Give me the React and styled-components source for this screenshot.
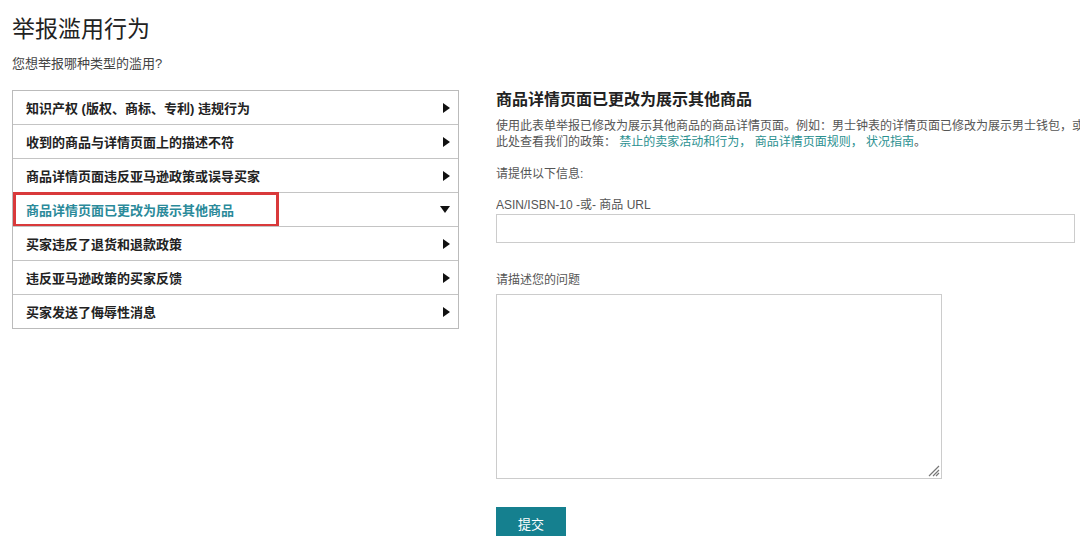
import React from "react";
import styled, { createGlobalStyle } from "styled-components";

const Global = createGlobalStyle`
  html, body { margin: 0; padding: 0; background: #fff; overflow: hidden; }
  body { font-family: "Liberation Sans", Arial, "Noto Sans CJK SC", sans-serif; color: #333; }
`;

const Page = styled.div`
  width: 1080px; height: 536px; overflow: hidden; padding: 14px 0 0 12px; box-sizing: border-box;
`;
const Title = styled.h1`
  margin: 0; font-size: 23px; font-weight: 400; line-height: 30px; color: #222;
`;
const Sub = styled.div`
  font-size: 13px; color: #444; margin-top: 11px; line-height: 18px;
`;
const Cols = styled.div`
  display: flex; gap: 37px; margin-top: 17px;
`;
const List = styled.div`
  width: 445px; flex: none; border: 1px solid #bbb; align-self: flex-start;
`;
const Row = styled.div`
  position: relative; height: 33px; display: flex; align-items: center; justify-content: space-between;
  padding: 0 8px 0 13px; font-size: 13px; font-weight: 700;
  color: ${p => (p.$active ? "#2a8a9a" : "#222")};
  border-top: ${p => (p.$first ? "none" : "1px solid #c4c4c4")};
`;
const Highlight = styled.div`
  position: absolute; left: 0; top: -1px; width: 266px; height: 35px;
  border: 3px solid #d9393b; box-sizing: border-box; pointer-events: none;
`;
const Arrow = styled.span`
  width: 0; height: 0;
  ${p => p.$down
    ? "border-left:5px solid transparent;border-right:5px solid transparent;border-top:7px solid #111;"
    : "border-top:5px solid transparent;border-bottom:5px solid transparent;border-left:7px solid #111;"}
`;
const Right = styled.div`
  flex: 1; min-width: 0; overflow: hidden;
`;
const H2 = styled.h2`
  margin: 0; font-size: 16px; font-weight: 700; color: #222; line-height: 20px;
`;
const Desc = styled.div`
  margin-top: 8px; font-size: 12px; line-height: 16px; color: #555; white-space: nowrap;
`;
const Link = styled.span` color: #2a9090; `;
const Label = styled.div`
  font-size: 12px; color: #555; line-height: 16px; margin-top: ${p => p.$mt}px;
`;
const Input = styled.div`
  margin-top: 1px; width: 579px; height: 29px; border: 1px solid #ccc; box-sizing: border-box;
`;
const Area = styled.div`
  position: relative; margin-top: 6px; width: 446px; height: 185px; border: 1px solid #ccc; box-sizing: border-box;
`;
const Grip = styled.svg` position: absolute; right: 1px; bottom: 1px; `;
const Button = styled.div`
  margin-top: 28px; width: 70px; height: 32px; background: #15808f; color: #fff;
  font-size: 13px; display: flex; align-items: center; justify-content: center;
`;

const items = [
  "知识产权 (版权、商标、专利) 违规行为",
  "收到的商品与详情页面上的描述不符",
  "商品详情页面违反亚马逊政策或误导买家",
  "商品详情页面已更改为展示其他商品",
  "买家违反了退货和退款政策",
  "违反亚马逊政策的买家反馈",
  "买家发送了侮辱性消息",
];

export default function App() {
  return (
    <Page>
      <Global />
      <Title>举报滥用行为</Title>
      <Sub>您想举报哪种类型的滥用?</Sub>
      <Cols>
        <List>
          {items.map((t, i) => (
            <Row key={i} $first={i === 0} $active={i === 3}>
              {i === 3 && <Highlight />}
              <span>{t}</span>
              <Arrow $down={i === 3} />
            </Row>
          ))}
        </List>
        <Right>
          <H2>商品详情页面已更改为展示其他商品</H2>
          <Desc>
            使用此表单举报已修改为展示其他商品的商品详情页面。例如：男士钟表的详情页面已修改为展示男士钱包，或
            <br />
            此处查看我们的政策： <Link>禁止的卖家活动和行为，</Link> <Link>商品详情页面规则，</Link> <Link>状况指南</Link>。
          </Desc>
          <Label $mt={16}>请提供以下信息:</Label>
          <Label $mt={15}>ASIN/ISBN-10 -或- 商品 URL</Label>
          <Input />
          <Label $mt={29}>请描述您的问题</Label>
          <Area>
            <Grip width="14" height="14" viewBox="0 0 14 14">
              <path d="M13 3L3 13M13 7L7 13M13 10L10 13" stroke="#777" strokeWidth="1.2" />
            </Grip>
          </Area>
          <Button>提交</Button>
        </Right>
      </Cols>
    </Page>
  );
}
